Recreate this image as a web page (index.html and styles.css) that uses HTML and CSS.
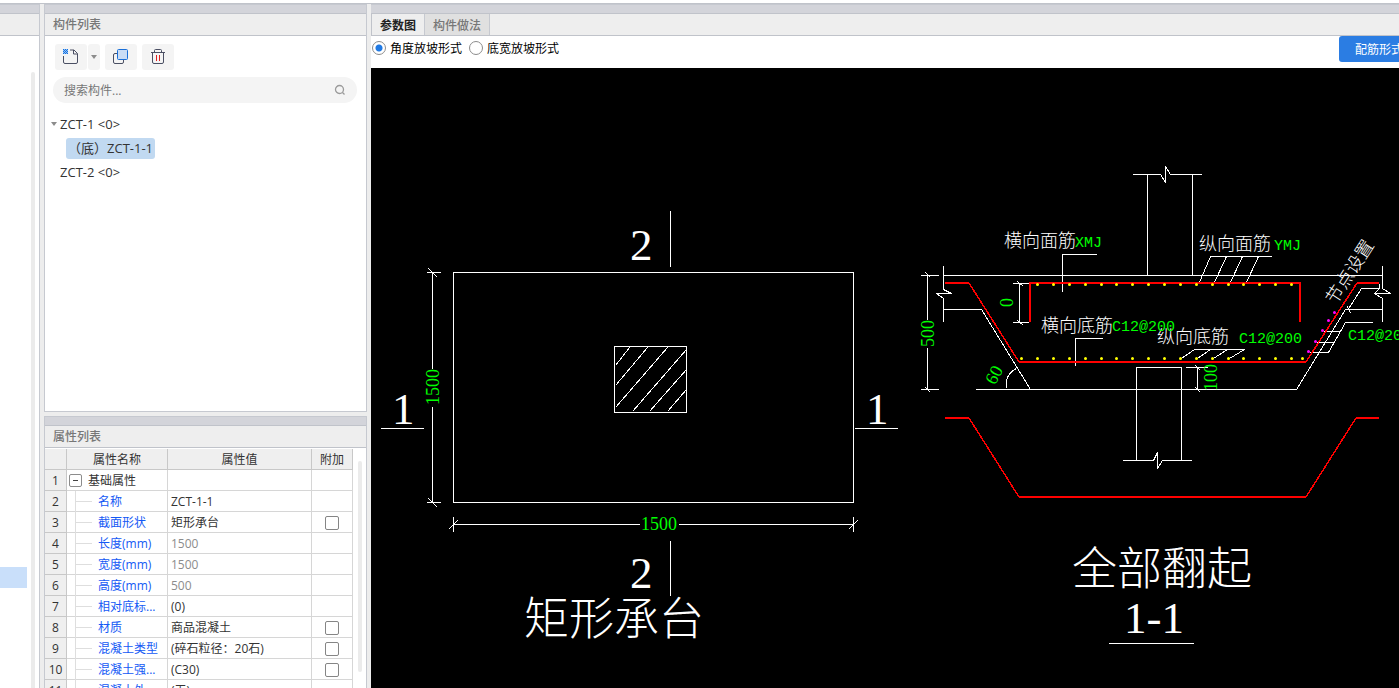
FILE: index.html
```
<!DOCTYPE html>
<html lang="zh-CN">
<head>
  <meta charset="UTF-8">
  <meta name="viewport" content="width=device-width, initial-scale=1.0">
  <title>构件列表</title>
  <link rel="stylesheet" href="styles.css">
</head>
<body>
  <div class="app">
    <div class="nav">
      <div class="bar"></div>
      <div class="head"></div>
      <div class="nav-body">
        <div class="nav-selected"></div>
        <div class="nav-scroll"></div>
      </div>
    </div>

    <div class="side">
      <section class="panel components">
        <div class="bar"></div>
        <h2 class="head">构件列表</h2>
        <div class="toolbar">
          <div class="split">
            <button class="tool" aria-label="新建">
              <svg width="18" height="18" viewBox="0 0 18 18" fill="none">
                <path d="M1.500 8v6q0 1.500 1.500 1.500h11q1.500 0 1.500-1.500V5.500l-3.500-3.500H8M11.500 2v4h4" stroke="#4a4f63"/>
                <path d="M1 1h1v1H1zM3 1h1v1H3zM5 1h1v1H5zM2 2h1v1H2zM4 2h1v1H4zM1 3h1v1H1zM3 3h1v1H3zM5 3h1v1H5zM2 4h1v1H2zM4 4h1v1H4zM1 5h1v1H1zM3 5h1v1H3zM5 5h1v1H5z" fill="#1273e6"/>
                <path d="M1 1h5v5H1z" fill="#1273e6" fill-opacity=".4"/>
              </svg>
            </button>
            <button class="tool tool-arrow" aria-label="更多">
              <svg width="6" height="4" viewBox="0 0 6 4"><path d="M0 0h6L3 4z" fill="#8c8c8c"/></svg>
            </button>
          </div>
          <button class="tool" aria-label="复制">
            <svg width="18" height="18" viewBox="0 0 18 18" fill="none">
              <rect x="1.500" y="5.500" width="10" height="10" rx="1.500" stroke="#4a4f63"/>
              <rect x="5.500" y="1.500" width="10" height="10" rx="1" fill="#c9dcf5" stroke="#1a6fd8"/>
            </svg>
          </button>
          <button class="tool" aria-label="删除">
            <svg width="18" height="18" viewBox="0 0 18 18" fill="none">
              <path d="M2 4.500h14M5.500 4V2.500q0-1 1-1h5q1 0 1 1V4M3.500 4.500V14q0 1.500 1.500 1.500h8q1.500 0 1.500-1.500V4.500" stroke="#4a4f63"/>
              <path d="M7.500 7v6M10.500 7v6" stroke="#e02020"/>
            </svg>
          </button>
        </div>
        <div class="search">
          <input type="text" placeholder="搜索构件..." aria-label="搜索构件">
          <svg width="12" height="12" viewBox="0 0 12 12" fill="none" stroke="#9a9a9a" stroke-width="1.300">
            <circle cx="5.500" cy="5.500" r="4"/>
            <path d="M8.500 8.500L10.500 10.500"/>
          </svg>
        </div>
        <ul class="tree">
          <li><svg class="caret" width="6" height="4" viewBox="0 0 6 4"><path d="M0 0h6L3 4z" fill="#8c8c8c"/></svg>ZCT-1 &lt;0&gt;</li>
          <li class="child"><span class="selected">（底）ZCT-1-1</span></li>
          <li class="root">ZCT-2 &lt;0&gt;</li>
        </ul>
      </section>

      <section class="panel props">
        <div class="bar"></div>
        <h2 class="head">属性列表</h2>
        <div class="props-body">
          <table>
            <colgroup>
              <col class="col-no"><col class="col-name"><col class="col-value"><col class="col-add">
            </colgroup>
            <thead>
              <tr><th></th><th>属性名称</th><th>属性值</th><th>附加</th></tr>
            </thead>
            <tbody>
              <tr><th>1</th><td><div class="name group"><button class="toggle" aria-label="收起"></button>基础属性</div></td><td></td><td></td></tr>
              <tr><th>2</th><td><div class="name"><i></i>名称</div></td><td>ZCT-1-1</td><td></td></tr>
              <tr><th>3</th><td><div class="name"><i></i>截面形状</div></td><td>矩形承台</td><td><input type="checkbox" aria-label="截面形状 附加"></td></tr>
              <tr><th>4</th><td><div class="name"><i></i>长度(mm)</div></td><td class="muted">1500</td><td></td></tr>
              <tr><th>5</th><td><div class="name"><i></i>宽度(mm)</div></td><td class="muted">1500</td><td></td></tr>
              <tr><th>6</th><td><div class="name"><i></i>高度(mm)</div></td><td class="muted">500</td><td></td></tr>
              <tr><th>7</th><td><div class="name"><i></i>相对底标...</div></td><td>(0)</td><td></td></tr>
              <tr><th>8</th><td><div class="name"><i></i>材质</div></td><td>商品混凝土</td><td><input type="checkbox" aria-label="材质 附加"></td></tr>
              <tr><th>9</th><td><div class="name"><i></i>混凝土类型</div></td><td>(碎石粒径：20石)</td><td><input type="checkbox" aria-label="混凝土类型 附加"></td></tr>
              <tr><th>10</th><td><div class="name"><i></i>混凝土强...</div></td><td>(C30)</td><td><input type="checkbox" aria-label="混凝土强度等级 附加"></td></tr>
              <tr><th>11</th><td><div class="name"><i></i>混凝土外...</div></td><td>(无)</td><td></td></tr>
            </tbody>
          </table>
          <div class="props-scroll"></div>
        </div>
      </section>
    </div>

    <main class="main">
      <div class="bar"></div>
      <div class="tabs">
        <button class="tab active">参数图</button>
        <button class="tab">构件做法</button>
      </div>
      <div class="options">
        <label><input type="radio" name="slope" checked>角度放坡形式</label>
        <label><input type="radio" name="slope">底宽放坡形式</label>
        <button class="primary">配筋形式</button>
      </div>
      <div class="canvas">
        <svg class="drawing" viewBox="371 68 1028 620" preserveAspectRatio="xMinYMin slice">
          <g class="line" transform="translate(.5 .5)">
            <!-- plan -->
            <path d="M453 272H853V502H453z"/>
            <path d="M614 346H686V412H614z"/>
            <path d="M615 365L629 347M615 385L647 347M615 407L667 347M632 411L686 349M649 411L686 369M667 411L686 389"/>
            <path d="M432 272V368M432 406V502M426 272H440M426 502H440M428 268L437 277M428 498L437 507"/>
            <path d="M453 524H639M678 524H853M453 516V531M853 516V531M448 529L457 520M848 529L857 520"/>
            <path d="M670 210V266M670 540V595M380 428H423M854 428H897"/>

            <!-- section 1-1 -->
            <path d="M1132 174H1160L1165 182V166L1170 174H1201M1147 174V275M1192 174V275"/>
            <path d="M943 275H1382"/>
            <path d="M943 265V289L951 293H936L943 298V321"/>
            <path d="M1382 265V288L1390 293H1374L1382 298V321M1374 293L1379 288V283"/>
            <path d="M943 309H981L1030 389M975 389H1296L1345 309H1382"/>
            <path d="M1379 288H1361L1347 310M1347 306L1350 313"/>
            <path d="M1309 352H1328L1345 322H1372M1316 342H1333M1323 331H1340"/>
            <path d="M1016 368Q1004 374 1006 388"/>
            <path d="M1062 291V254H1096M1075 365V338H1102"/>
            <path d="M1271 256H1210L1198 284M1226 256L1213 284M1242 256L1229 284M1258 256L1245 284"/>
            <path d="M1244 349H1194L1181 358M1210 349L1197 358M1227 349L1213 358M1244 349L1229 358"/>
            <path d="M1136 460V367H1181V460M1122 460H1153L1157 452V468L1162 460H1191"/>
            <path d="M927 275V319M927 347V389M920 275H938M920 389H938M925 272L930 277M925 387L930 392"/>
            <path d="M1019 283V322M1012 283H1028M1012 322H1028M1017 281L1023 286M1017 320L1023 325"/>
            <path d="M1197 367V389M1185 367H1207M1195 365L1200 370M1195 387L1200 392"/>
            <path d="M1108 643H1193"/>
          </g>

          <g class="bars">
            <path d="M945 283H969M1019 362H1306M1357 283H1379M1030 322V283H1300V322"/>
            <path d="M945 418H969M1019 497H1306M1356 418H1379"/>
            <path class="thin" d="M969 283L1019 362M1306 362L1357 283M969 418L1019 497M1306 497L1356 418"/>
          </g>

          <g class="dots" transform="translate(.5 .5)">
            <path d="M1037 284h0M1053 284h0M1069 284h0M1085 284h0M1101 284h0M1116 284h0M1132 284h0M1148 284h0M1164 284h0M1180 284h0M1196 284h0M1212 284h0M1228 284h0M1243 284h0M1259 284h0M1275 284h0M1291 284h0"/>
            <path d="M1021 358h0M1037 358h0M1053 358h0M1069 358h0M1085 358h0M1101 358h0M1116 358h0M1132 358h0M1148 358h0M1164 358h0M1180 358h0M1196 358h0M1212 358h0M1228 358h0M1243 358h0M1259 358h0M1275 358h0M1291 358h0M1302 358h0"/>
            <path class="pink" d="M1334 312h0M1328 320h0M1322 330h0M1315 341h0M1308 351h0"/>
          </g>

          <g class="title">
            <text x="630" y="260">2</text>
            <text x="630" y="588">2</text>
            <text x="392" y="424">1</text>
            <text x="866" y="424">1</text>
            <text x="524" y="635">矩形承台</text>
            <text x="1072" y="585">全部翻起</text>
            <text x="1154" y="633" text-anchor="middle">1-1</text>
          </g>

          <g class="label">
            <text x="1004" y="247">横向面筋</text>
            <text x="1199" y="250">纵向面筋</text>
            <text x="1041" y="332">横向底筋</text>
            <text x="1157" y="343">纵向底筋</text>
            <text transform="translate(1350 272) rotate(-57)" y="6" text-anchor="middle">节点设置</text>
          </g>

          <g class="dim">
            <text x="641" y="530">1500</text>
            <text transform="translate(439 405) rotate(-90)">1500</text>
            <text transform="translate(934 347) rotate(-90)">500</text>
            <text transform="translate(1013 307) rotate(-90)">0</text>
            <text transform="translate(1217 391) rotate(-90)">100</text>
            <text transform="translate(994 375) rotate(-62)" y="6" text-anchor="middle">60</text>
          </g>

          <g class="code">
            <text x="1075" y="247">XMJ</text>
            <text x="1274" y="250">YMJ</text>
            <text x="1112" y="331">C12@200</text>
            <text x="1239" y="343">C12@200</text>
            <text x="1348" y="340">C12@200</text>
          </g>
        </svg>
      </div>
    </main>
  </div>
</body>
</html>
```
FILE: styles.css
```
* {
  box-sizing: border-box;
}

body {
  margin: 0;
  height: 100vh;
  overflow: hidden;
  padding-top: 3px;
  background-color: #fff;
  color: #333;
  font-family: "Open Sans", "Noto Sans CJK SC", sans-serif;
  font-size: 12px;
}

button, input {
  font: inherit;
  margin: 0;
}

button {
  border: none;
  padding: 0;
  cursor: pointer;
}

.app {
  display: flex;
  gap: 4px;
  height: 100%;
  border-top: 1px solid #c0c3ca;
  background-color: #ededed;
}

.bar {
  flex: none;
  height: 10px;
  background-color: #d3d4da;
  border-top: 1px solid #c6c9d0;
  border-bottom: 1px solid #c0c3ca;
}

.head {
  flex: none;
  height: 22px;
  margin: 0;
  padding-left: 8px;
  background-color: #eee;
  border-bottom: 1px solid #c0c3ca;
  color: #777;
  font-size: 12px;
  font-weight: 500;
  line-height: 21px;
}

/* left strip */
.nav {
  display: flex;
  flex-direction: column;
  flex: none;
  width: 40px;
  background-color: #fff;
  border-right: 1px solid #c6c9d0;
}

.nav-body {
  flex: 1;
  display: flex;
  justify-content: space-between;
  padding: 36px 4px 0 0;
}

.nav-selected {
  align-self: flex-end;
  width: 27px;
  height: 21px;
  margin-bottom: 100px;
  background-color: #c9dffa;
}

.nav-scroll {
  width: 4px;
  background-color: #ebebeb;
  border-radius: 2px 2px 0 0;
}

/* component and property panels */
.side {
  display: flex;
  flex-direction: column;
  flex: none;
  gap: 4px;
  width: 323px;
}

.panel {
  display: flex;
  flex-direction: column;
  min-height: 0;
  overflow: hidden;
  background-color: #fff;
  border: 1px solid #c6c9d0;
  border-top: none;
}

.components {
  flex: 3 1 0;
}

.props {
  flex: 2 1 0;
  border-bottom: none;
}

.toolbar {
  display: flex;
  gap: 5px;
  padding: 8px 10px 7px;
}

.split {
  display: flex;
  gap: 1px;
}

.tool {
  display: flex;
  align-items: center;
  justify-content: center;
  width: 32px;
  height: 26px;
  background-color: #f4f4f4;
  border-radius: 3px;
}

.tool-arrow {
  width: 12px;
}

.search {
  display: flex;
  align-items: center;
  height: 26px;
  margin: 0 9px 0 8px;
  padding: 0 11px;
  background-color: #f4f4f4;
  border-radius: 13px;
}

.search input {
  flex: 1;
  min-width: 0;
  padding: 0;
  border: none;
  outline: none;
  background: none;
}

.search input::placeholder {
  color: #777;
}

.tree {
  list-style: none;
  margin: 9px 0 0;
  padding: 0 6px;
  font-size: 13px;
}

.tree li {
  display: flex;
  align-items: center;
  height: 24px;
}

.caret {
  margin-right: 3px;
}

.tree .root {
  padding-left: 9px;
}

.tree .child {
  padding-left: 15px;
}

.selected {
  height: 21px;
  padding: 0 2px;
  line-height: 21px;
  background-color: #c1d9f1;
  border-radius: 3px;
}

.props-body {
  display: flex;
  padding-top: 1px;
}

table {
  flex: none;
  width: 308px;
  table-layout: fixed;
  border-collapse: separate;
  border-spacing: 0;
}

.col-no {
  width: 22px;
}

.col-name {
  width: 101px;
}

.col-value {
  width: 144px;
}

.col-add {
  width: 41px;
}

th, td {
  height: 21px;
  padding: 1px 0 0;
  border-right: 1px solid #d6d6d6;
  border-bottom: 1px solid #d6d6d6;
  line-height: 19px;
  white-space: nowrap;
}

th {
  background-color: #efefef;
  border-color: #c8c8c8;
  font-weight: normal;
  text-align: center;
}

td:nth-child(3) {
  padding-left: 3px;
}

td:last-child {
  text-align: center;
}

.muted {
  color: #8c8c8c;
}

.name {
  display: flex;
  align-items: center;
  height: 19px;
  color: #1459f5;
}

.name i {
  width: 17px;
  height: 21px;
  margin: 0 6px 0 8px;
  border-left: 1px solid #dedede;
  background: linear-gradient(#dedede, #dedede) 0 10px / 100% 1px no-repeat;
}

.group {
  color: #333;
}

.toggle {
  display: flex;
  align-items: center;
  justify-content: center;
  width: 13px;
  height: 13px;
  margin: 0 6px 0 2px;
  background-color: #fff;
  border: 1px solid #8c8c8c;
  border-radius: 2px;
}

.toggle::before {
  content: "";
  width: 5px;
  height: 1px;
  background-color: #444;
}

input[type="checkbox"] {
  appearance: none;
  display: block;
  width: 14px;
  height: 14px;
  margin: 0 auto;
  background-color: #fff;
  border: 1px solid #858585;
  border-radius: 2px;
}

.props-scroll {
  width: 4px;
  height: 211px;
  margin: 12px 0 0 5px;
  background-color: #ebebeb;
  border-radius: 2px;
}

/* drawing area */
.main {
  flex: 1;
  display: flex;
  flex-direction: column;
  min-width: 0;
  background-color: #fff;
}

.tabs {
  display: flex;
  flex: none;
  height: 22px;
  background-color: #eee;
  border-left: 1px solid #c0c3ca;
  border-bottom: 1px solid #c0c3ca;
}

.tab {
  padding: 0 8px;
  background-color: #e0e0e0;
  border-right: 1px solid #c6c9d0;
  color: #777;
  font-weight: 500;
}

.tab.active {
  background-color: #eee;
  color: #222;
  font-weight: 700;
}

.options {
  display: flex;
  flex: none;
  gap: 7px;
  height: 32px;
  margin-right: -20px;
  padding-left: 1px;
  color: #000;
}

.options label {
  display: flex;
  align-items: center;
  gap: 4px;
  height: 24px;
}

input[type="radio"] {
  appearance: none;
  width: 14px;
  height: 14px;
  border: 1px solid #8c8c8c;
  border-radius: 50%;
  background-color: #fff;
}

input[type="radio"]:checked {
  background: radial-gradient(circle, #2079e3 3px, #fff 4px);
}

.primary {
  height: 26px;
  margin-left: auto;
  padding: 0 16px;
  background-color: #2b7de3;
  border-radius: 3px;
  color: #fff;
}

.canvas {
  flex: 1;
  min-height: 0;
  background-color: #000;
}

.drawing {
  display: block;
  width: 100%;
  height: 100%;
}

.line {
  fill: none;
  stroke: #fff;
  shape-rendering: crispEdges;
}

.bars {
  fill: none;
  stroke: #f00;
  stroke-width: 2;
  shape-rendering: crispEdges;
}

.thin {
  stroke-width: 1.5;
}

.dots {
  stroke: #ff0;
  stroke-width: 3;
  stroke-linecap: round;
}

.pink {
  stroke: #f0f;
}

.title, .label {
  fill: #fff;
  font-family: "Liberation Serif", "Noto Sans CJK SC", serif;
  font-weight: 300;
}

.title {
  font-size: 45px;
}

.label {
  font-size: 18px;
}

.dim, .code {
  fill: #0f0;
}

.dim {
  font-family: "Liberation Serif", serif;
  font-size: 18px;
}

.code {
  font-family: "Liberation Mono", monospace;
  font-size: 15px;
}
```
